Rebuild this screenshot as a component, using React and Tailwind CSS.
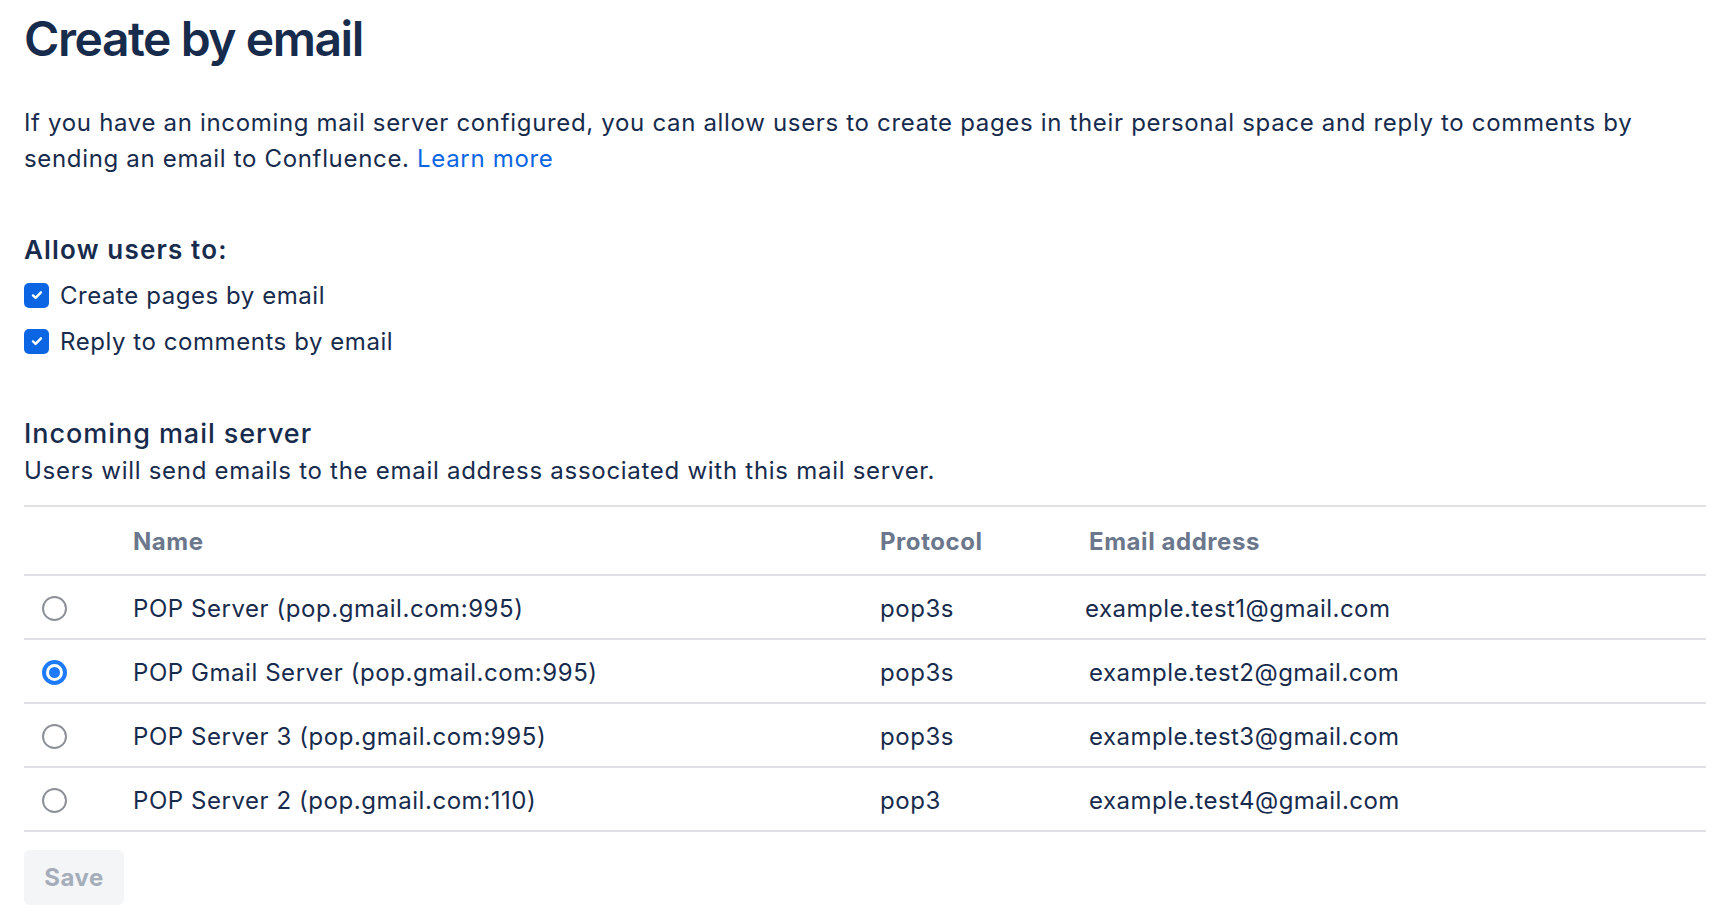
import React, { useState } from 'react';

const servers = [
  { id: 1, name: 'POP Server (pop.gmail.com:995)', protocol: 'pop3s', email: 'example.test1@gmail.com', shift: true },
  { id: 2, name: 'POP Gmail Server (pop.gmail.com:995)', protocol: 'pop3s', email: 'example.test2@gmail.com' },
  { id: 3, name: 'POP Server 3 (pop.gmail.com:995)', protocol: 'pop3s', email: 'example.test3@gmail.com' },
  { id: 4, name: 'POP Server 2 (pop.gmail.com:110)', protocol: 'pop3', email: 'example.test4@gmail.com' },
];

const Checkbox = ({ label }) => (
  <label className="flex items-center h-[36px]">
    <span className="w-[25px] h-[25px] rounded-[5px] bg-[#0C66E4] flex items-center justify-center mr-[11px] -mt-[2px]">
      <svg width="14" height="14" viewBox="0 0 14 14" fill="none">
        <path d="M3 7.4l2.6 2.5L11 4.3" stroke="white" strokeWidth="2.4" strokeLinecap="round" strokeLinejoin="round" />
      </svg>
    </span>
    <span>{label}</span>
  </label>
);

const Radio = ({ checked }) =>
  checked ? (
    <span className="w-[25px] h-[25px] rounded-full bg-[#1D7AFC] flex items-center justify-center">
      <span className="w-[17px] h-[17px] rounded-full bg-white flex items-center justify-center">
        <span className="w-[11px] h-[11px] rounded-full bg-[#1D7AFC]" />
      </span>
    </span>
  ) : (
    <span className="w-[25px] h-[25px] rounded-full bg-white border-[2.5px] border-[#8C9199]" />
  );

export default function App() {
  const [selected, setSelected] = useState(2);

  return (
    <div className="w-full min-h-screen bg-white px-[24px] pt-[11px] text-[#172B4D] tracking-[0.035em] font-['Inter',sans-serif]">
      <h1 className="text-[48px] leading-[56px] font-semibold tracking-[-0.03em]">Create by email</h1>

      <p className="mt-[38px] text-[24px] leading-[36px] tracking-[0.028em]">
        If you have an incoming mail server configured, you can allow users to create pages in their personal space and reply to comments by
        <br />
        sending an email to Confluence. <a href="#" className="text-[#0C66E4]">Learn more</a>
      </p>

      <h2 className="mt-[57px] text-[26px] leading-[32px] font-semibold tracking-[0.045em]">Allow users to:</h2>
      <div className="mt-[12px] flex flex-col gap-[10px] text-[24px]">
        <Checkbox label="Create pages by email" />
        <Checkbox label="Reply to comments by email" />
      </div>

      <h2 className="mt-[56px] text-[27px] leading-[36px] font-medium tracking-[0.035em]">Incoming mail server</h2>
      <p className="mt-[1px] text-[24px] leading-[36px] tracking-[0.03em]">Users will send emails to the email address associated with this mail server.</p>

      <div className="mt-[16px] text-[24px] leading-[36px]">
        <div className="grid grid-cols-[109px_747px_209px_1fr] h-[71px] items-center border-y-2 border-[#DFE1E6] font-bold text-[#6B778C] pt-[2px]">
          <span />
          <span>Name</span>
          <span>Protocol</span>
          <span>Email address</span>
        </div>
        {servers.map(s => (
          <div
            key={s.id}
            onClick={() => setSelected(s.id)}
            className="grid grid-cols-[109px_747px_209px_1fr] h-[64px] items-center border-b-2 border-[#DFE1E6] pt-[3px]"
          >
            <span className="pl-[18px] flex -mt-[1px]">
              <Radio checked={selected === s.id} />
            </span>
            <span>{s.name}</span>
            <span>{s.protocol}</span>
            <span className={s.shift ? '-ml-[4px] tracking-[0.02em]' : 'tracking-[0.02em]'}>{s.email}</span>
          </div>
        ))}
      </div>

      <button className="mt-[18px] w-[100px] h-[55px] rounded-[6px] bg-[#F4F5F7] text-[#A5ADBA] text-[24px] font-bold">
        Save
      </button>
    </div>
  );
}
